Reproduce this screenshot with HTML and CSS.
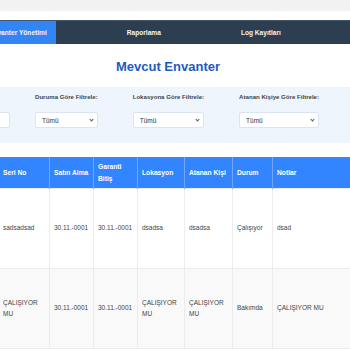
FILE: index.html
```html
<!DOCTYPE html>
<html lang="tr">
  <head>
    <meta charset="UTF-8" />
    <meta name="viewport" content="width=device-width, initial-scale=1.0" />
    <title>Envanter Yönetimi</title>
    <link rel="stylesheet" href="styles.css">
  </head>
  <body>
    <div class="app">
      <nav class="nav">
        <a href="#" class="nav__link nav__link--active">Envanter Yönetimi</a>
        <a href="#" class="nav__link">Raporlama</a>
        <a href="#" class="nav__link">Log Kayıtları</a>
      </nav>

      <h2 class="title">Mevcut Envanter</h2>

      <section class="filters">
        <div class="filter filter--search">
          <label for="search">Ara:</label>
          <input type="text" id="search" />
        </div>
        <div class="filter">
          <label for="status">Duruma Göre Filtrele:</label>
          <span class="select">
            <select id="status">
              <option>Tümü</option>
              <option>Çalışıyor</option>
              <option>Bakımda</option>
            </select>
          </span>
        </div>
        <div class="filter">
          <label for="location">Lokasyona Göre Filtrele:</label>
          <span class="select">
            <select id="location">
              <option>Tümü</option>
            </select>
          </span>
        </div>
        <div class="filter">
          <label for="person">Atanan Kişiye Göre Filtrele:</label>
          <span class="select">
            <select id="person">
              <option>Tümü</option>
            </select>
          </span>
        </div>
      </section>

      <table class="inventory">
        <colgroup>
          <col style="width: 30px" />
          <col style="width: 100px" />
          <col style="width: 93px" />
          <col style="width: 51px" />
          <col style="width: 44px" />
          <col style="width: 44px" />
          <col style="width: 47px" />
          <col style="width: 48px" />
          <col style="width: 40px" />
          <col style="width: 120px" />
          <col />
        </colgroup>
        <thead>
          <tr>
            <th>ID</th>
            <th>Ürün Adı</th>
            <th>Kategori</th>
            <th>Seri No</th>
            <th>Satın Alma</th>
            <th>Garanti Bitiş</th>
            <th>Lokasyon</th>
            <th>Atanan Kişi</th>
            <th>Durum</th>
            <th>Notlar</th>
            <th>İşlemler</th>
          </tr>
        </thead>
        <tbody>
          <tr>
            <td>1</td>
            <td>dsadsa</td>
            <td>dsadsa</td>
            <td>sadsadsad</td>
            <td>30.11.-0001</td>
            <td>30.11.-0001</td>
            <td>dsadsa</td>
            <td>dsadsa</td>
            <td>Çalışıyor</td>
            <td>dsad</td>
            <td><button class="btn">Düzenle</button> <button class="btn btn--danger">Sil</button></td>
          </tr>
          <tr>
            <td>2</td>
            <td>ÇALIŞIYOR MU</td>
            <td>ÇALIŞIYOR MU</td>
            <td>ÇALIŞIYOR MU</td>
            <td>30.11.-0001</td>
            <td>30.11.-0001</td>
            <td>ÇALIŞIYOR MU</td>
            <td>ÇALIŞIYOR MU</td>
            <td>Bakımda</td>
            <td>ÇALIŞIYOR MU</td>
            <td><button class="btn">Düzenle</button> <button class="btn btn--danger">Sil</button></td>
          </tr>
        </tbody>
      </table>
    </div>
  </body>
</html>
```
FILE: styles.css
```css
:root {
  --nav: #2c3e50;
  --primary: #3385ff;
  --active: #3185f5;
  --title: #1e5bc0;
  --panel: #eef5fd;
  --text: #444;
}
*,
*::before,
*::after {
  box-sizing: border-box;
}
html {
  overflow: hidden;
}
body {
  margin: 0;
  padding-top: 11px;
  font-family: "Liberation Sans", Arial, sans-serif;
  color: var(--text);
  background: #f2f2f2;
}

/* Page is wider than the window and scrolled to the right */
.app {
  width: 816px;
  margin-left: -240px;
  padding-top: 9px;
  padding-bottom: 20px;
  background: #fff;
}

/* Navigation */
.nav {
  display: flex;
  gap: 62px;
  padding-left: 220px;
  background: var(--nav);
  border-top: 1px solid #41566b;
}
.nav__link {
  padding: 0 9px;
  font-size: 6.6px;
  font-weight: bold;
  line-height: 23px;
  color: #f4f6f8;
  text-decoration: none;
}
.nav__link--active {
  background: var(--active);
}

.title {
  margin: 15px 0 13px;
  font-size: 13px;
  line-height: 15px;
  text-align: center;
  color: var(--title);
}

/* Filters */
.filters {
  display: flex;
  align-items: flex-start;
  margin: 0 15px;
  padding: 6px 12px 15px;
  background: var(--panel);
  border-radius: 4px;
}
.filter {
  display: flex;
  flex-direction: column;
  margin-right: 35px;
}
.filter--search {
  width: 223px;
  margin-right: 25px;
}
.filter label {
  margin-bottom: 11px;
  font-size: 6.1px;
  font-weight: bold;
  line-height: 8px;
  color: #444;
}
.select {
  position: relative;
  display: block;
}
.select::after {
  content: "";
  position: absolute;
  top: 6px;
  right: 5px;
  width: 3px;
  height: 3px;
  border-right: 1px solid #555;
  border-bottom: 1px solid #555;
  transform: rotate(45deg);
  pointer-events: none;
}
.filter input,
.filter select {
  display: block;
  width: 100%;
  height: 16px;
  margin: 0;
  padding: 0 3px 0 6px;
  font-family: inherit;
  font-size: 6.5px;
  color: #333;
  background: #fff;
  border: 1px solid #dbe4ef;
  border-radius: 2px;
  appearance: none;
}

/* Table */
.inventory {
  width: calc(100% - 30px);
  margin: 14px 15px 0;
  table-layout: fixed;
  border-collapse: collapse;
}
.inventory th {
  padding: 4px;
  font-size: 6.7px;
  line-height: 11.5px;
  text-align: left;
  color: #fff;
  background: var(--primary);
  border-right: 1px solid rgba(255, 255, 255, 0.3);
}
.inventory tbody tr {
  height: 80px;
}
.inventory tbody tr:nth-child(even) {
  background: #f9f9f9;
}
.inventory td {
  padding: 4px;
  font-size: 6.5px;
  line-height: 10.5px;
  vertical-align: middle;
  border: 1px solid #ececec;
}
.btn {
  padding: 3px 6px;
  font-size: 6.5px;
  color: #fff;
  background: var(--primary);
  border: 0;
  border-radius: 2px;
}
.btn--danger {
  background: #e74c3c;
}
```
